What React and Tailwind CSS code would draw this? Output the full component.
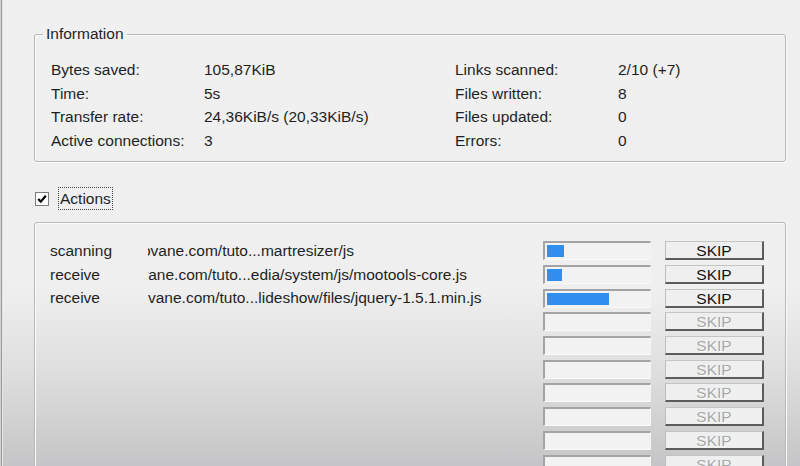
import React from 'react';

const info = [
  ['Bytes saved:', '105,87KiB', 'Links scanned:', '2/10 (+7)'],
  ['Time:', '5s', 'Files written:', '8'],
  ['Transfer rate:', '24,36KiB/s (20,33KiB/s)', 'Files updated:', '0'],
  ['Active connections:', '3', 'Errors:', '0'],
];

const actions = [
  { label: 'scanning', url: 'ovane.com/tuto...martresizer/js', shift: 'ml-[-6px]', fill: 17 },
  { label: 'receive', url: 'vane.com/tuto...edia/system/js/mootools-core.js', shift: 'ml-[-7.5px]', fill: 15 },
  { label: 'receive', url: 'vane.com/tuto...lideshow/files/jquery-1.5.1.min.js', shift: 'ml-0', fill: 62 },
];

function ProgressBar({ fill }) {
  return (
    <div className="w-[108px] h-[19px] border-t-2 border-l-2 border-b border-r border-t-[#a4a4a4] border-l-[#a4a4a4] border-b-[#fafafa] border-r-[#f4f4f4] bg-[#f2f2f2] py-[2px] pl-[2px]">
      {fill > 0 && <div className="h-full bg-[#2f8eee]" style={{ width: fill }} />}
    </div>
  );
}

function SkipButton({ disabled }) {
  return (
    <button
      type="button"
      className={
        'w-[99px] h-[19px] ml-[14px] border-t border-l border-b-2 border-r-2 border-t-[#c4c4c4] border-l-[#bdbdbd] border-b-[#5c5c5c] border-r-[#5c5c5c] bg-[#efefef] text-center leading-[17px] ' +
        (disabled ? 'text-[#a8a8a8] [text-shadow:1px_1px_0_#fafafa]' : 'text-[#111]')
      }
    >
      SKIP
    </button>
  );
}

export default function App() {
  const rows = [...actions, ...Array.from({ length: 8 }, () => null)];

  return (
    <div
      className="w-[800px] h-[466px] overflow-hidden flex text-[15.5px] text-[#1f1f1f] bg-[linear-gradient(to_bottom,#f0f0f0_0%,#efefef_62%,#dedede_80%,#c5c5c7_100%)]"
      style={{ fontFamily: '"Liberation Sans", Arial, sans-serif' }}
    >
      <div className="w-[1px] bg-[#d2d2d2]" />
      <div className="w-[1px] bg-[#9a9a9a]" />
      <div className="w-[1px] bg-[#e6e6e6]" />

      <div className="flex-1">
        <fieldset className="mt-[25px] ml-[31px] w-[752px] border border-[#b7b7b7] rounded-[3px] shadow-[inset_1px_1px_0_#fbfbfb,1px_1px_0_#fbfbfb] pb-[9px]">
          <legend className="ml-[8px] px-[3px] leading-[18px]">Information</legend>
          <div className="pt-[15px] pl-[16px] grid grid-cols-[153px_251px_163px_1fr] auto-rows-[23.5px] leading-[23.5px]">
            {info.map((r) => (
              <React.Fragment key={r[0]}>
                <span>{r[0]}</span>
                <span>{r[1]}</span>
                <span>{r[2]}</span>
                <span>{r[3]}</span>
              </React.Fragment>
            ))}
          </div>
        </fieldset>

        <div className="mt-[25px] ml-[32px] flex items-center h-[23px]">
          <div className="w-[14px] h-[14px] border border-[#7c7c7c] bg-white flex items-center justify-center">
            <svg width="12" height="12" viewBox="0 0 12 12">
              <path d="M2.2 6 L4.8 8.6 L9.8 2.8" fill="none" stroke="#000" strokeWidth="2.2" />
            </svg>
          </div>
          <span className="ml-[9px] border border-dotted border-[#444] px-[1px] leading-[21px]">Actions</span>
        </div>

        <div className="mt-[12px] ml-[31px] w-[752px] h-[300px] border border-[#b7b7b7] rounded-t-[3px] shadow-[inset_1px_1px_0_#fbfbfb,1px_0_0_#fbfbfb] pt-[16px] pl-[15px]">
          {rows.map((r, i) => (
            <div key={i} className="h-[23.7px] flex items-center leading-[23.7px]">
              <span className="w-[98px]">{r ? r.label : ''}</span>
              <div className="w-[395px] overflow-hidden whitespace-nowrap">
                {r && <span className={'inline-block ' + r.shift}>{r.url}</span>}
              </div>
              <ProgressBar fill={r ? r.fill : 0} />
              <SkipButton disabled={!r} />
            </div>
          ))}
        </div>
      </div>
    </div>
  );
}
